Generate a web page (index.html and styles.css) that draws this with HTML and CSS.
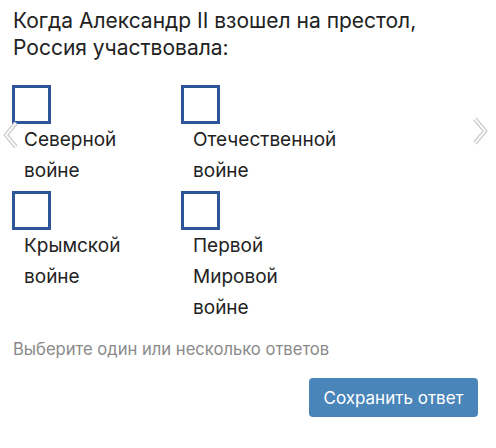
FILE: index.html
```html
<!DOCTYPE html>
<html lang="ru">
<head>
<meta charset="utf-8">
<link rel="stylesheet" href="styles.css">
</head>
<body>
<div class="quiz">
  <h1 class="question">Когда Александр II взошел на престол,<br>Россия участвовала:</h1>
  <div class="options">
    <label class="option"><span class="box"></span><span class="text">Северной<br>войне</span></label>
    <label class="option"><span class="box"></span><span class="text">Отечественной<br>войне</span></label>
    <label class="option"><span class="box"></span><span class="text">Крымской<br>войне</span></label>
    <label class="option"><span class="box"></span><span class="text">Первой<br>Мировой<br>войне</span></label>
  </div>
  <p class="hint">Выберите один или несколько ответов</p>
  <div class="actions"><button class="save">Сохранить ответ</button></div>
  <svg class="chev chev-left" width="16" height="28" viewBox="0 0 16 28"><polyline points="13,2 3,14 13,26" fill="none" stroke="#cfcfcf" stroke-width="4.4" stroke-linejoin="miter"/><polyline points="13,2 3,14 13,26" fill="none" stroke="#fff" stroke-width="1.6"/></svg>
  <svg class="chev chev-right" width="16" height="28" viewBox="0 0 16 28"><polyline points="3,2 13,14 3,26" fill="none" stroke="#cfcfcf" stroke-width="4.4" stroke-linejoin="miter"/><polyline points="3,2 13,14 3,26" fill="none" stroke="#fff" stroke-width="1.6"/></svg>
</div>
</body>
</html>
```
FILE: styles.css
```css
html, body { margin: 0; padding: 0; background: #fff; }
body { font-family: "Inter", "Liberation Sans", Arial, sans-serif; color: #222; width: 496px; height: 448px; overflow: hidden; }
.quiz { position: relative; padding: 7px 18px 0 13px; height: 448px; box-sizing: border-box; }
.question { margin: 0; font-size: 21px; font-weight: normal; line-height: 27px; }
.options { display: grid; grid-template-columns: 169px 169px; row-gap: 5px; margin-top: 24px; margin-left: -1px; }
.option { display: flex; flex-direction: column; align-items: flex-start; }
.box { width: 39px; height: 39px; box-sizing: border-box; border: 3px solid #2d5597; }
.text { padding-left: 12px; font-size: 19px; line-height: 31px; }
.hint { margin: 16px 0 0; font-size: 16.6px; line-height: 20px; color: #8a8a8a; }
.actions { display: flex; justify-content: flex-end; margin-top: 19px; }
.save { width: 169px; height: 39px; border: 0; border-radius: 4px; background: #4a85b9; color: #fff; font-family: inherit; font-size: 17px; padding: 0; }
.chev { position: absolute; }
.chev-left { left: 3px; top: 121px; }
.chev-right { left: 472px; top: 117px; }
```
